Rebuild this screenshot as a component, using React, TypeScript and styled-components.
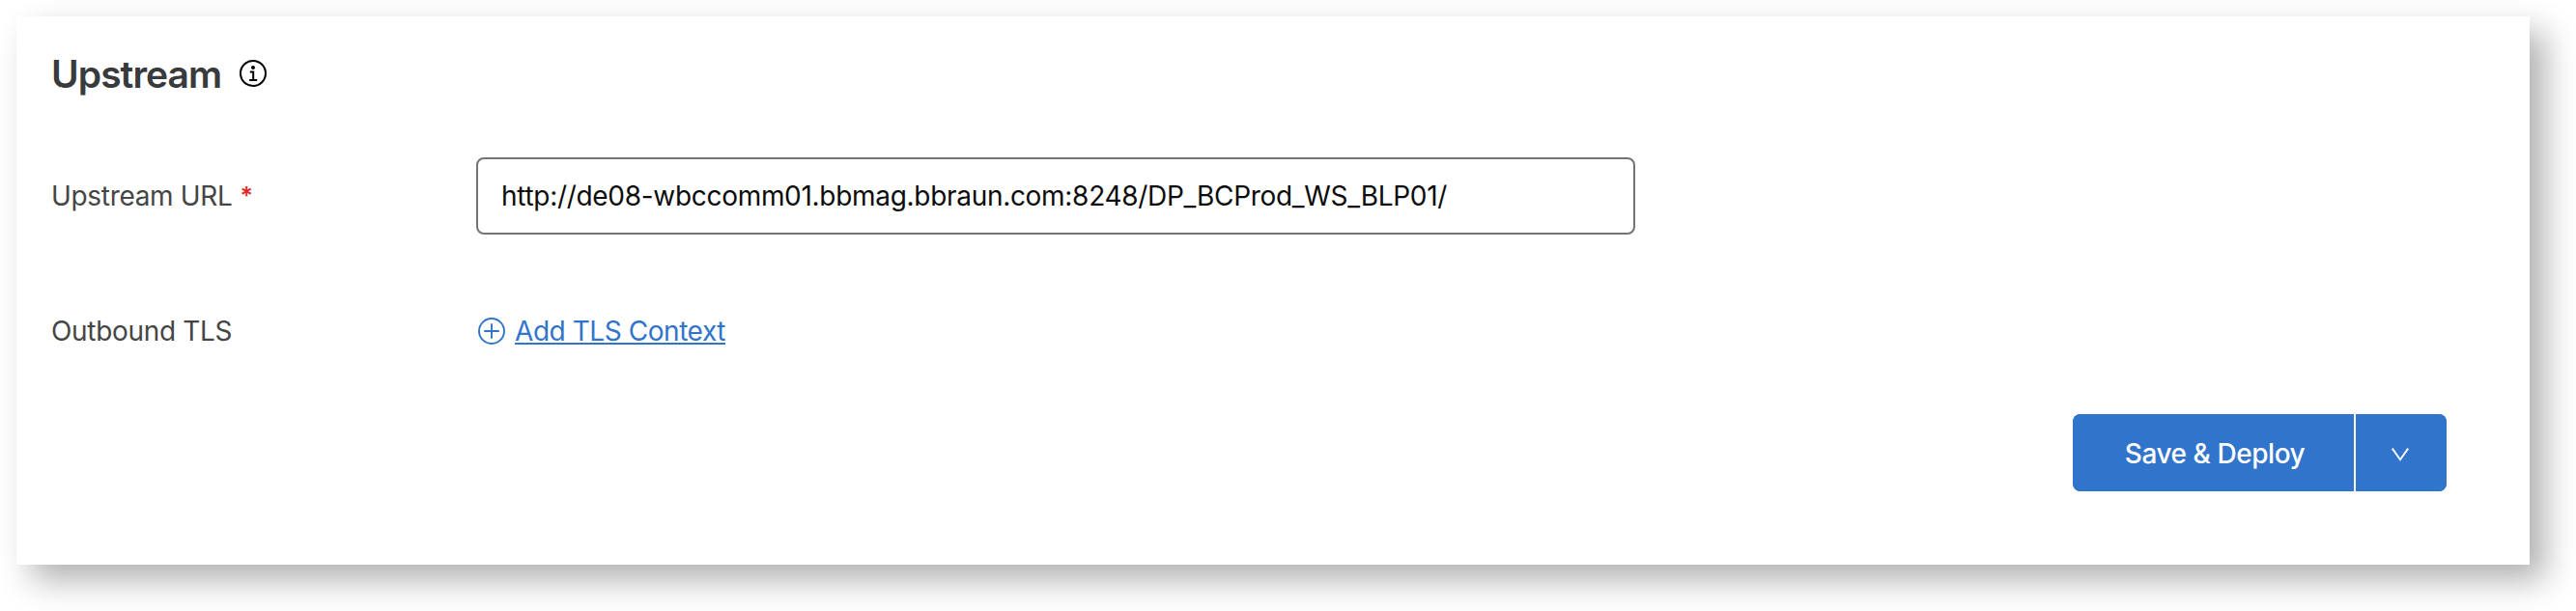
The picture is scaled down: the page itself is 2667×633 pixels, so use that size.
import React from 'react';
import styled, { createGlobalStyle } from 'styled-components';

const GlobalStyle = createGlobalStyle`
  * { box-sizing: border-box; }
  body { margin: 0; background: #fff; overflow: hidden; }
`;

const Page = styled.main`
  height: 633px;
  padding: 17px 48px 48px 17px;
  font-family: Inter, 'Liberation Sans', sans-serif;
  font-size: 28px;
  line-height: 40px;
  color: #454545;
`;

const Card = styled.form`
  display: flex;
  flex-direction: column;
  height: 568px;
  padding: 35px 86px 76px 36px;
  background: #fff;
  box-shadow: 16px 16px 32px rgba(0, 0, 0, 0.31);
`;

const Header = styled.header`
  display: flex;
  flex: none;
  align-items: center;
  gap: 19px;
  height: 48px;
  margin-bottom: 63px;
`;

const Title = styled.h2`
  margin: 0;
  padding-top: 2px;
  width: 176px;
  font-size: 39px;
  line-height: 48px;
  font-weight: 600;
  letter-spacing: -0.95px;
  color: #393a3c;
`;

const Fields = styled.div`
  display: flex;
  flex: none;
  flex-direction: column;
  gap: 60px;
`;

const FieldRow = styled.div`
  display: flex;
  align-items: center;
  height: 80px;
`;

const Label = styled.label`
  flex: 0 0 440px;
  display: flex;
  align-items: center;
  gap: 8px;
  letter-spacing: -0.32px;
`;

const Required = styled.span`
  color: #e02b2b;
  font-size: 25px;
  font-weight: 600;
`;

const UrlInput = styled.input`
  width: 1200px;
  height: 80px;
  padding: 0 24px;
  border: 2px solid #747474;
  border-radius: 8px;
  outline: none;
  background: #fff;
  color: #0c0c0c;
  font: inherit;
  letter-spacing: -0.3px;
`;

const AddLink = styled.a`
  display: flex;
  align-items: center;
  gap: 10px;
  padding-left: 2px;
  color: #3174cc;
  letter-spacing: -0.44px;
`;

const LinkText = styled.span`
  text-decoration: underline;
  text-decoration-thickness: 2px;
  text-underline-offset: 2px;
  text-decoration-skip-ink: none;
`;

const Footer = styled.footer`
  display: flex;
  justify-content: flex-end;
  margin-top: 46px;
`;

const SplitButton = styled.div`
  display: flex;
  height: 80px;
  border-radius: 8px;
  overflow: hidden;
  background: #3174cc;
`;

const ButtonPart = styled.button`
  display: flex;
  align-items: center;
  justify-content: center;
  border: 0;
  background: #3174cc;
  color: #fff;
  font: inherit;
  font-weight: 500;
  letter-spacing: -0.45px;
`;

const MainAction = styled(ButtonPart)`
  width: 291px;
  padding: 2px 0 0 3px;
`;

const MenuToggle = styled(ButtonPart)`
  width: 96px;
  padding: 4px 2px 0 0;
  border-left: 2px solid #fff;
`;

const Icon = styled.svg`
  display: block;
  flex: none;
  fill: none;
  stroke: currentColor;
`;

const InfoIcon = () => (
  <Icon width="28" height="28" viewBox="0 0 28 28" color="#000" strokeWidth="2">
    <circle cx="14" cy="14" r="13" />
    <circle cx="14" cy="8" r="2" fill="currentColor" stroke="none" />
    <path d="M10.8 12.6H14.2V21M10.2 21H18.2" />
  </Icon>
);

const PlusIcon = () => (
  <Icon width="28" height="28" viewBox="0 0 28 28" strokeWidth="1.9">
    <circle cx="14" cy="14" r="13" />
    <path d="M6.2 14H21.8M14 6.2V21.8" />
  </Icon>
);

const ChevronIcon = () => (
  <Icon width="20" height="16" viewBox="0 0 20 16" strokeWidth="1.9">
    <path d="M1.8 1.6L10 13.2L18.2 1.6" />
  </Icon>
);

export default function App() {
  return (
    <>
      <GlobalStyle />
      <Page>
        <Card>
          <Header>
            <Title>Upstream</Title>
            <InfoIcon />
          </Header>
          <Fields>
            <FieldRow>
              <Label htmlFor="upstream-url">
                Upstream URL <Required>*</Required>
              </Label>
              <UrlInput
                id="upstream-url"
                defaultValue="http://de08-wbccomm01.bbmag.bbraun.com:8248/DP_BCProd_WS_BLP01/"
              />
            </FieldRow>
            <FieldRow>
              <Label>Outbound TLS</Label>
              <AddLink>
                <PlusIcon />
                <LinkText>Add TLS Context</LinkText>
              </AddLink>
            </FieldRow>
          </Fields>
          <Footer>
            <SplitButton>
              <MainAction type="button">Save &amp; Deploy</MainAction>
              <MenuToggle type="button" aria-label="More deploy options">
                <ChevronIcon />
              </MenuToggle>
            </SplitButton>
          </Footer>
        </Card>
      </Page>
    </>
  );
}
